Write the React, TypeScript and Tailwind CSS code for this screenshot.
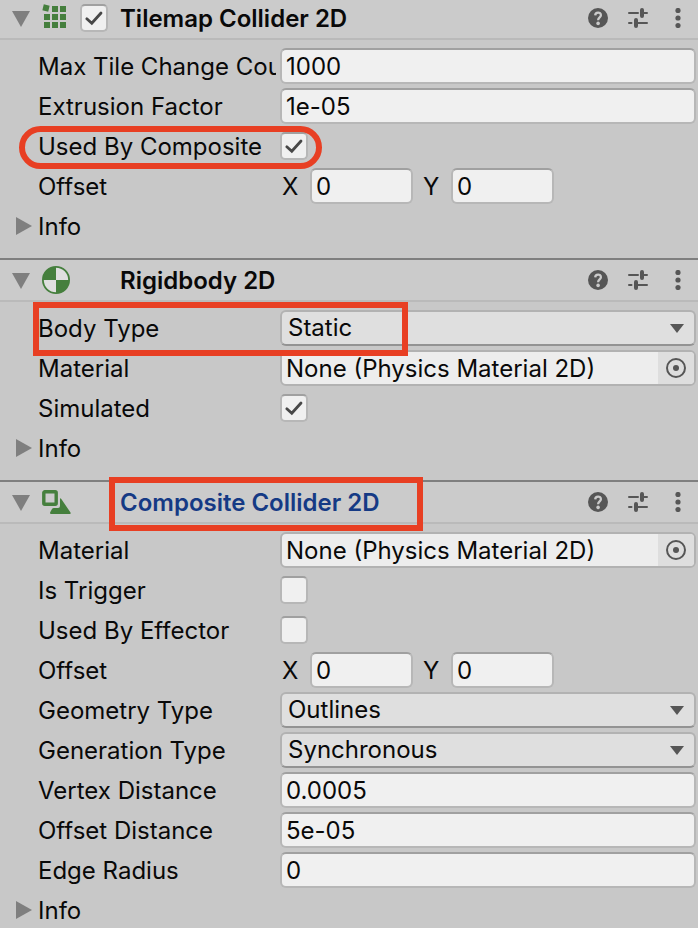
import { useId, type ReactNode } from "react";

const FIELD =
  "h-9 rounded-[6px] border-2 border-[#b7b7b7] border-t-[#a0a0a0] bg-[#f0f0f0] px-1 text-2xl text-[#090909] outline-none";

function TilemapIcon() {
  return (
    <svg width="28" height="28" viewBox="0 0 28 28" fill="#457f3d" aria-hidden="true">
      <rect x="1" y="1" width="6" height="6" transform="rotate(14 4 4)" />
      <path d="M10 2h6v6h-6zM18 2h6v6h-6zM2 10h6v6H2zM10 10h6v6h-6zM18 10h6v6h-6zM2 18h6v6H2zM10 18h6v6h-6zM18 18h6v6h-6z" />
    </svg>
  );
}

function RigidbodyIcon() {
  return (
    <svg width="28" height="28" viewBox="0 0 28 28" aria-hidden="true">
      <circle cx="14" cy="14" r="13.100" fill="#dfdfdf" stroke="#457f3d" strokeWidth="1.800" />
      <path d="M14 14V1A13 13 0 0 0 1 14zM14 14v13a13 13 0 0 0 13-13z" fill="#457f3d" />
    </svg>
  );
}

function CompositeIcon() {
  return (
    <svg width="30" height="28" viewBox="0 0 30 28" aria-hidden="true">
      <rect x="1.8" y="3.8" width="12.4" height="12.4" rx="1" fill="none" stroke="#457f3d" strokeWidth="3.4" />
      <path d="M18 11Q18.200 9.500 19.300 11L28.500 24.500Q29 26 27.500 26H9Q7.600 25.800 8.200 24.200L10 21Q10.600 20 12 20H16Q18 20 18 18Z" fill="#457f3d" />
    </svg>
  );
}

function HelpIcon() {
  return (
    <svg width="20" height="20" viewBox="0 0 20 20" aria-hidden="true">
      <circle cx="10" cy="10" r="10" fill="#565656" />
      <path d="M7.200 7.400C7.300 3.600 12.900 3.700 12.900 7.200C12.900 9.500 10.100 9.300 10.100 12.300" fill="none" stroke="#cbcbcb" strokeWidth="2.300" />
      <circle cx="10.100" cy="15.400" r="1.800" fill="#cbcbcb" />
    </svg>
  );
}

function PresetIcon() {
  return (
    <svg width="20" height="20" viewBox="0 0 20 20" fill="none" stroke="#565656" strokeLinecap="round" aria-hidden="true">
      <path d="M1 5h9M14 5h5M1 15h2.500M8 15h11" strokeWidth="2" />
      <path d="M14 2v6M8 12v6" strokeWidth="4" />
    </svg>
  );
}

function MenuIcon() {
  return (
    <svg width="20" height="20" viewBox="0 0 20 20" fill="#565656" aria-hidden="true">
      <circle cx="10" cy="2.500" r="2.600" />
      <circle cx="10" cy="10" r="2.600" />
      <circle cx="10" cy="17.500" r="2.600" />
    </svg>
  );
}

function Checkbox({ id, checked = false, label }: { id?: string; checked?: boolean; label?: string }) {
  return (
    <span className="relative block size-7 shrink-0">
      <input
        id={id}
        type="checkbox"
        aria-label={label}
        defaultChecked={checked}
        className="peer block size-7 appearance-none rounded-[5px] border-2 border-[#b7b7b7] border-t-[#a0a0a0] bg-[#f0f0f0]"
      />
      <svg
        viewBox="0 0 28 28"
        className="pointer-events-none absolute inset-0 hidden size-7 peer-checked:block"
        fill="none"
        stroke="#474747"
        strokeWidth="2.800"
        strokeLinecap="round"
        aria-hidden="true"
      >
        <path d="M6.800 14.800l5 4.400L21 9" />
      </svg>
    </span>
  );
}

function Row({ label, mark, children }: { label: string; mark?: ReactNode; children: (id: string) => ReactNode }) {
  const id = useId();
  return (
    <div className="relative flex h-9 items-center gap-1">
      <label htmlFor={id} className="w-[238px] shrink-0 overflow-hidden pt-0.5 whitespace-nowrap">
        {label}
      </label>
      {children(id)}
      {mark}
    </div>
  );
}

function TextRow({ label, value }: { label: string; value: string }) {
  return <Row label={label}>{(id) => <input id={id} defaultValue={value} className={`${FIELD} min-w-0 flex-1`} />}</Row>;
}

function CheckRow({ label, checked, mark }: { label: string; checked?: boolean; mark?: ReactNode }) {
  return (
    <Row label={label} mark={mark}>
      {(id) => <Checkbox id={id} checked={checked} />}
    </Row>
  );
}

function SelectRow({ label, options, mark }: { label: string; options: string[]; mark?: ReactNode }) {
  return (
    <Row label={label} mark={mark}>
      {(id) => (
        <span className="relative block min-w-0 flex-1">
          <select
            id={id}
            className="block h-9 w-full appearance-none rounded-[6px] border-2 border-[#b2b2b2] border-b-[#939393] bg-[#dfdfdf] px-1.5 pb-0.5 text-2xl text-[#090909] outline-none"
          >
            {options.map((o) => (
              <option key={o}>{o}</option>
            ))}
          </select>
          <svg width="14" height="9" viewBox="0 0 14 9" className="pointer-events-none absolute top-3.5 right-3" aria-hidden="true">
            <path d="M0 0h14L7 9z" fill="#565656" />
          </svg>
        </span>
      )}
    </Row>
  );
}

function ObjectRow({ label, value }: { label: string; value: string }) {
  return (
    <Row label={label}>
      {(id) => (
        <span className="flex h-9 min-w-0 flex-1 overflow-hidden rounded-[6px] border-2 border-[#b2b2b2] bg-[#ededed]">
          <input id={id} readOnly defaultValue={value} className="min-w-0 flex-1 bg-transparent px-1 pt-0.5 outline-none" />
          <button type="button" aria-label={`Select ${label}`} className="flex w-9 items-center justify-center bg-[#dedede]">
            <svg width="20" height="20" viewBox="0 0 20 20" aria-hidden="true">
              <circle cx="10" cy="10" r="9" fill="none" stroke="#565656" strokeWidth="2" />
              <circle cx="10" cy="10" r="3" fill="#565656" />
            </svg>
          </button>
        </span>
      )}
    </Row>
  );
}

function OffsetRow() {
  const id = useId();
  return (
    <div role="group" aria-label="Offset" className="flex h-9 items-center">
      <span className="w-[244px] shrink-0 pt-0.5">Offset</span>
      <label htmlFor={`${id}x`} className="w-7 shrink-0 pt-0.5">X</label>
      <input id={`${id}x`} defaultValue="0" className={`${FIELD} w-[103px]`} />
      <label htmlFor={`${id}y`} className="ml-2.5 w-7 shrink-0 pt-0.5">Y</label>
      <input id={`${id}y`} defaultValue="0" className={`${FIELD} w-[103px]`} />
    </div>
  );
}

function InfoRow() {
  return (
    <button type="button" aria-expanded="false" className="-ml-[22px] flex h-9 items-center gap-1.5">
      <svg width="16" height="18" viewBox="0 0 16 18" aria-hidden="true">
        <path d="M0 0l16 9L0 18z" fill="#7f7f7f" />
      </svg>
      <span className="pt-0.5">Info</span>
    </button>
  );
}

type SectionProps = {
  title: string;
  icon: ReactNode;
  first?: boolean;
  toggle?: boolean;
  highlighted?: boolean;
  children: ReactNode;
};

function Section({ title, icon, first, toggle, highlighted, children }: SectionProps) {
  return (
    <section className="pb-3.5 last:pb-0">
      <header
        className={`flex items-center border-b-2 border-b-[#bababa] bg-[#cbcbcb] pr-2.5 pl-3 ${
          first ? "h-10 pb-0.5" : "h-11 border-t-2 border-t-[#7f7f7f]"
        }`}
      >
        <button type="button" aria-label={`Collapse ${title}`} className="w-[30px] shrink-0 pt-0.5">
          <svg width="18" height="16" viewBox="0 0 18 16" className="block" aria-hidden="true">
            <path d="M0 0h18L9 16z" fill="#7f7f7f" />
          </svg>
        </button>
        <span className="w-[38px] shrink-0">{icon}</span>
        <span className="w-10 shrink-0">{toggle && <Checkbox checked label={`Enable ${title}`} />}</span>
        <h2 className={`relative pt-0.5 font-semibold whitespace-nowrap ${highlighted ? "text-[#153a85]" : "text-[#090909]"}`}>
          {title}
          {highlighted && (
            <span className="pointer-events-none absolute -top-2 -left-[11px] h-[54px] w-[314px] border-[6px] border-[#e83f23]" />
          )}
        </h2>
        <div className="ml-auto flex gap-5">
          <button type="button" aria-label="Help"><HelpIcon /></button>
          <button type="button" aria-label="Presets"><PresetIcon /></button>
          <button type="button" aria-label="More"><MenuIcon /></button>
        </div>
      </header>
      <div className="flex flex-col gap-1 pt-2 pr-0.5 pl-[38px]">{children}</div>
    </section>
  );
}

export default function App() {
  return (
    <main className="min-h-screen bg-[#c8c8c8] font-['Inter',sans-serif] text-2xl text-[#090909]">
      <Section title="Tilemap Collider 2D" icon={<TilemapIcon />} first toggle>
        <TextRow label="Max Tile Change Count" value="1000" />
        <TextRow label="Extrusion Factor" value="1e-05" />
        <CheckRow
          label="Used By Composite"
          checked
          mark={
            <span className="pointer-events-none absolute -top-0.5 -left-[19px] h-[43px] w-[303px] rounded-full border-[6px] border-[#e83f23]" />
          }
        />
        <OffsetRow />
        <InfoRow />
      </Section>
      <Section title="Rigidbody 2D" icon={<RigidbodyIcon />}>
        <SelectRow
          label="Body Type"
          options={["Static", "Dynamic", "Kinematic"]}
          mark={
            <span className="pointer-events-none absolute -top-2 -left-[5px] z-10 h-[54px] w-[375px] border-[6px] border-[#e83f23]" />
          }
        />
        <ObjectRow label="Material" value="None (Physics Material 2D)" />
        <CheckRow label="Simulated" checked />
        <InfoRow />
      </Section>
      <Section title="Composite Collider 2D" icon={<CompositeIcon />} highlighted>
        <ObjectRow label="Material" value="None (Physics Material 2D)" />
        <CheckRow label="Is Trigger" />
        <CheckRow label="Used By Effector" />
        <OffsetRow />
        <SelectRow label="Geometry Type" options={["Outlines", "Polygons"]} />
        <SelectRow label="Generation Type" options={["Synchronous", "Manual"]} />
        <TextRow label="Vertex Distance" value="0.0005" />
        <TextRow label="Offset Distance" value="5e-05" />
        <TextRow label="Edge Radius" value="0" />
        <InfoRow />
      </Section>
    </main>
  );
}
